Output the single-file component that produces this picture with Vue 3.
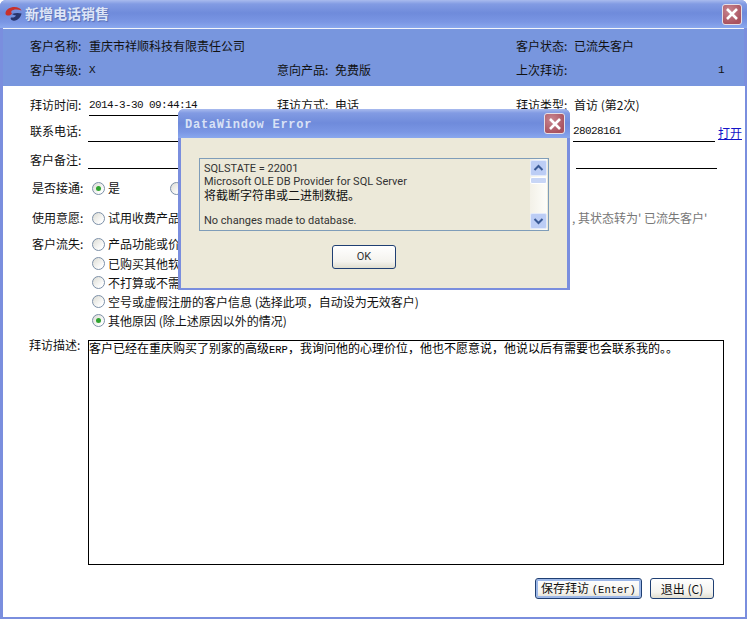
<script setup>
const lostReasons = [
  { text: '产品功能或价格不满意', checked: false },
  { text: '已购买其他软件产品', checked: false },
  { text: '不打算或不需要购买', checked: false },
  { text: '空号或虚假注册的客户信息 (选择此项，自动设为无效客户)', checked: false },
  { text: '其他原因 (除上述原因以外的情况)', checked: true }
]
</script>

<template>
  <div class="window">
    <header class="titlebar">
      <svg class="logo" width="17" height="14" viewBox="0 0 17 14">
        <path d="M.5 6.500C.5 2.500 5 0 9.500 0c3.500 0 6 1.300 7 3.500-2.500-.8-5.500-1.300-8-.6C6 3.500 5.500 5 7 6.800 4.500 9.500.5 9 .5 6.500z" fill="#c8302c" />
        <path d="M7 7c3-1.200 6.500-1.400 9.500-.5-.5 3.500-3.500 7-7.500 7.200-2.500.1-4-2.200-3-3.200 2.500.3 4.500-.5 5-2C9.500 8.200 8 7.800 7 7z" fill="#27356e" />
      </svg>
      <span class="title">新增电话销售</span>
      <span class="close main-close">
        <svg width="14" height="14" viewBox="0 0 14 14"><path d="M2 2l10 10M12 2L2 12" stroke="#fff" stroke-width="2.600" /></svg>
      </span>
    </header>

    <section class="summary">
      <div class="row summary-row">
        <div class="field col1"><span class="label">客户名称:</span><span>重庆市祥顺科技有限责任公司</span></div>
        <div class="field col2"></div>
        <div class="field col3"><span class="label">客户状态:</span><span>已流失客户</span></div>
      </div>
      <div class="row summary-row">
        <div class="field col1"><span class="label">客户等级:</span><span class="mono">X</span></div>
        <div class="field col2"><span class="label">意向产品:</span><span>免费版</span></div>
        <div class="field col3 last-visit"><span class="label">上次拜访:</span><span class="mono count">1</span></div>
      </div>
    </section>

    <main class="body">
      <div class="row form-row first">
        <div class="field col1"><span class="label">拜访时间:</span><span class="line line-time mono">2014-3-30 09:44:14</span></div>
        <div class="field col2"><span class="label">拜访方式:</span><span>电话</span></div>
        <div class="field col3"><span class="label">拜访类型:</span><span>首访 (第2次)</span></div>
      </div>
      <div class="row form-row phone">
        <div class="field wide"><span class="label">联系电话:</span><span class="line line-wide"></span></div>
        <div class="field col3 phone-end">
          <span class="line line-phone mono">28028161</span>
          <a class="link">打开</a>
        </div>
      </div>
      <div class="row form-row note">
        <div class="field wide"><span class="label">客户备注:</span><span class="line line-wide"></span></div>
        <div class="field col3"><span class="line line-note"></span></div>
      </div>

      <div class="choice connect">
        <span class="choice-label">是否接通:</span>
        <label class="option option-yes"><i class="radio on"></i>是</label>
        <label class="option"><i class="radio"></i></label>
      </div>
      <div class="choice intent">
        <span class="choice-label">使用意愿:</span>
        <label class="option option-trial"><i class="radio"></i>试用收费产品</label>
        <span class="hint">, 其状态转为' 已流失客户'</span>
      </div>
      <div class="choice lost">
        <span class="choice-label">客户流失:</span>
        <div class="reasons">
          <label v-for="r in lostReasons" :key="r.text" class="option reason">
            <i class="radio" :class="{ on: r.checked }"></i>{{ r.text }}
          </label>
        </div>
      </div>

      <div class="describe">
        <span class="describe-label">拜访描述:</span>
        <div class="describe-box">客户已经在重庆购买了别家的高级<span class="mono-in">ERP</span>，我询问他的心理价位，他也不愿意说，他说以后有需要也会联系我的。。</div>
      </div>

      <footer class="actions">
        <button class="btn btn-save">保存拜访 <span class="mono-in">(Enter)</span></button>
        <button class="btn btn-exit">退出 (C)</button>
      </footer>
    </main>

    <div class="dialog">
      <div class="dialog-title">
        <span class="dialog-caption">DataWindow Error</span>
        <span class="close dialog-close">
          <svg width="14" height="14" viewBox="0 0 14 14"><path d="M2 2l10 10M12 2L2 12" stroke="#fff" stroke-width="2.600" /></svg>
        </span>
      </div>
      <div class="dialog-client">
        <div class="message">
          <div class="message-text">
            <div>SQLSTATE = 22001</div>
            <div>Microsoft OLE DB Provider for SQL Server</div>
            <div class="cn">将截断字符串或二进制数据。</div>
            <div class="blank"></div>
            <div>No changes made to database.</div>
          </div>
          <div class="scrollbar">
            <span class="sb-btn">
              <svg width="11" height="8" viewBox="0 0 11 8"><path d="M1.500 6l4-4 4 4" fill="none" stroke="#3a5a96" stroke-width="2" /></svg>
            </span>
            <span class="sb-thumb"></span>
            <span class="sb-track"></span>
            <span class="sb-btn">
              <svg width="11" height="8" viewBox="0 0 11 8"><path d="M1.500 2l4 4 4-4" fill="none" stroke="#3a5a96" stroke-width="2" /></svg>
            </span>
          </div>
        </div>
        <button class="btn btn-ok">OK</button>
      </div>
    </div>
  </div>
</template>

<style>
html, body { margin: 0; padding: 0; background: #fff; }
</style>

<style scoped>
.window {
  position: relative;
  width: 747px;
  height: 619px;
  box-sizing: border-box;
  padding: 0 2px 2px 3px;
  background: #7a8ede;
  border-radius: 6px 6px 0 0;
  display: flex;
  flex-direction: column;
  overflow: hidden;
  font-family: "Noto Sans CJK SC", "Liberation Sans", sans-serif;
  font-size: 12px;
  color: #111;
  line-height: 20px;
}
.titlebar {
  flex: none;
  height: 28px;
  margin: 0 -2px 0 -3px;
  display: flex;
  align-items: center;
  background: linear-gradient(#a9bbee 0, #829be3 4px, #6f8bdb 13px, #7a96e4 22px, #8aa8ee 28px);
}
.logo { margin: 0 0 0 5px; flex: none; }
.title {
  margin-left: 3px;
  margin-bottom: 2px;
  font-size: 14px;
  font-weight: 700;
  color: #dde5f7;
  text-shadow: 1px 1px 1px #5a6fb5;
}
.close {
  display: flex;
  align-items: center;
  justify-content: center;
  box-sizing: border-box;
  border: 1px solid #e6dfe6;
  border-radius: 3px;
  background: radial-gradient(circle at 35% 30%, #c98690, #a9525f 75%);
}
.main-close { width: 20px; height: 21px; margin-left: auto; margin-right: 5px; }

.summary {
  flex: none;
  height: 58px;
  box-sizing: border-box;
  border-top: 1px solid #f2f5fc;
  background: #7896de;
  padding: 5px 0 0 27px;
  margin-right: 1px;
}
.row { display: flex; }
.summary-row { height: 24px; align-items: center; }
.field { display: flex; align-items: center; flex: none; }
.col1 { width: 247px; }
.col1 .label { width: 59px; }
.col2 { width: 239px; }
.col3 { width: 226px; }
.wide { width: 486px; }
.label { width: 58px; flex: none; }
.mono { font-family: "Liberation Mono", monospace; font-size: 11px; letter-spacing: -.6px; }
.mono-in { font-family: "Liberation Mono", monospace; font-size: 10.500px; }
.count { margin-left: 144px; }

.body {
  flex: 1;
  min-height: 0;
  background: #fff;
  padding-left: 27px;
  display: flex;
  flex-direction: column;
}
.form-row { align-items: flex-end; }
.form-row .field { align-items: flex-end; }
.form-row .field > span:not(.line) { margin-bottom: 1px; }
.note .field > span:not(.line) { margin-bottom: -1px; }
.first { height: 30px; }
.phone { height: 26px; }
.note { height: 27px; }
.line {
  display: block;
  height: 20px;
  box-sizing: border-box;
  border-bottom: 1px solid #000;
  line-height: 18px;
}
.line-time { width: 190px; }
.line-wide { width: 400px; }
.wide .label { width: 58px; }
.line-phone { width: 142px; margin-left: 57px; }
.line-note { width: 141px; margin-left: 60px; }
.link {
  margin-left: 3px;
  margin-bottom: -1px;
  color: #1414c8;
  text-decoration: underline;
}

.choice { display: flex; margin-left: 2px; }
.choice-label { width: 60px; flex: none; }
.option { display: flex; align-items: center; height: 20px; }
.connect { margin-top: 9px; }
.intent { margin-top: 10px; }
.lost { margin-top: 6px; }
.option-yes { width: 78px; }
.option-trial { width: 480px; }
.hint { color: #777; }
.radio {
  display: block;
  flex: none;
  box-sizing: border-box;
  width: 13px;
  height: 13px;
  margin-right: 3px;
  border: 1px solid #7c90a8;
  border-radius: 50%;
  background: linear-gradient(135deg, #dcdcd4, #fff 80%);
  position: relative;
}
.radio.on::after {
  content: "";
  position: absolute;
  left: 3px;
  top: 3px;
  width: 5px;
  height: 5px;
  border-radius: 50%;
  background: #2fa32f;
}
.reasons { display: flex; flex-direction: column; }
.reason { height: 19px; }
.reason:first-child { height: 20px; }

.describe { display: flex; margin-top: 10px; }
.describe-label { width: 59px; flex: none; margin-top: -5px; margin-left: -1px; }
.describe-box {
  width: 636px;
  height: 225px;
  box-sizing: border-box;
  border: 1px solid #000;
  line-height: 13px;
  color: #000;
}
.actions {
  display: flex;
  margin-top: 13px;
  padding-left: 505px;
  gap: 8px;
}
.btn {
  font-family: inherit;
  font-size: 12px;
  color: #111;
  box-sizing: border-box;
  border: 1px solid #1f3f73;
  border-radius: 3px;
  background: linear-gradient(#fff, #f4f3ee 70%, #e0ded0);
  padding: 0;
  line-height: 16px;
}
.btn-save {
  width: 107px;
  height: 21px;
  box-shadow: inset 0 0 0 2px #9db8e8;
}
.btn-exit { width: 64px; height: 21px; }

.dialog {
  position: absolute;
  left: 178px;
  top: 109px;
  width: 392px;
  height: 181px;
  box-sizing: border-box;
  padding: 0 3px 2px;
  background: #7a8ede;
  border-radius: 6px 6px 0 0;
  display: flex;
  flex-direction: column;
}
.dialog-title {
  flex: none;
  height: 29px;
  margin: 0 -3px;
  display: flex;
  align-items: center;
  border-radius: 6px 6px 0 0;
  background: linear-gradient(#a9bbee 0, #829be3 4px, #6f8bdb 14px, #7a96e4 23px, #8aa8ee 29px);
}
.dialog-caption {
  margin-left: 7px;
  margin-top: 3px;
  font-family: "Liberation Mono", monospace;
  font-size: 12px;
  font-weight: 700;
  letter-spacing: .75px;
  color: #d9e2f6;
  line-height: 14px;
}
.dialog-close { width: 21px; height: 21px; margin-left: auto; margin-right: 5px; }
.dialog-client {
  flex: 1;
  background: #ece9d9;
  display: flex;
  flex-direction: column;
  align-items: center;
  padding-top: 20px;
}
.message {
  width: 350px;
  height: 73px;
  box-sizing: border-box;
  border: 1px solid #7f9db9;
  display: flex;
  flex: none;
}
.message-text {
  flex: 1;
  padding: 3px 0 0 4px;
  font-family: Roboto, "Liberation Sans", sans-serif;
  font-size: 11px;
  line-height: 13px;
  color: #333;
}
.cn { font-family: "Noto Sans CJK SC", sans-serif; font-size: 12px; color: #111; }
.blank { height: 13px; }
.scrollbar {
  width: 17px;
  flex: none;
  display: flex;
  flex-direction: column;
  margin-right: 1px;
  background: linear-gradient(90deg, #f3f1e8, #fdfdfa);
}
.sb-btn {
  height: 16px;
  margin: 1px 0;
  display: flex;
  align-items: center;
  justify-content: center;
  box-sizing: border-box;
  border: 1px solid #e4ebfb;
  border-radius: 2px;
  background: #bccdf5;
}
.sb-thumb {
  height: 7px;
  box-sizing: border-box;
  border: 1px solid #fff;
  border-radius: 2px;
  background: #c8d6f6;
}
.sb-track { flex: 1; }
.btn-ok {
  width: 64px;
  height: 24px;
  margin-top: 14px;
  margin-right: 20px;
  font-family: Roboto, "Liberation Sans", sans-serif;
  font-size: 11px;
  color: #333;
}
</style>
